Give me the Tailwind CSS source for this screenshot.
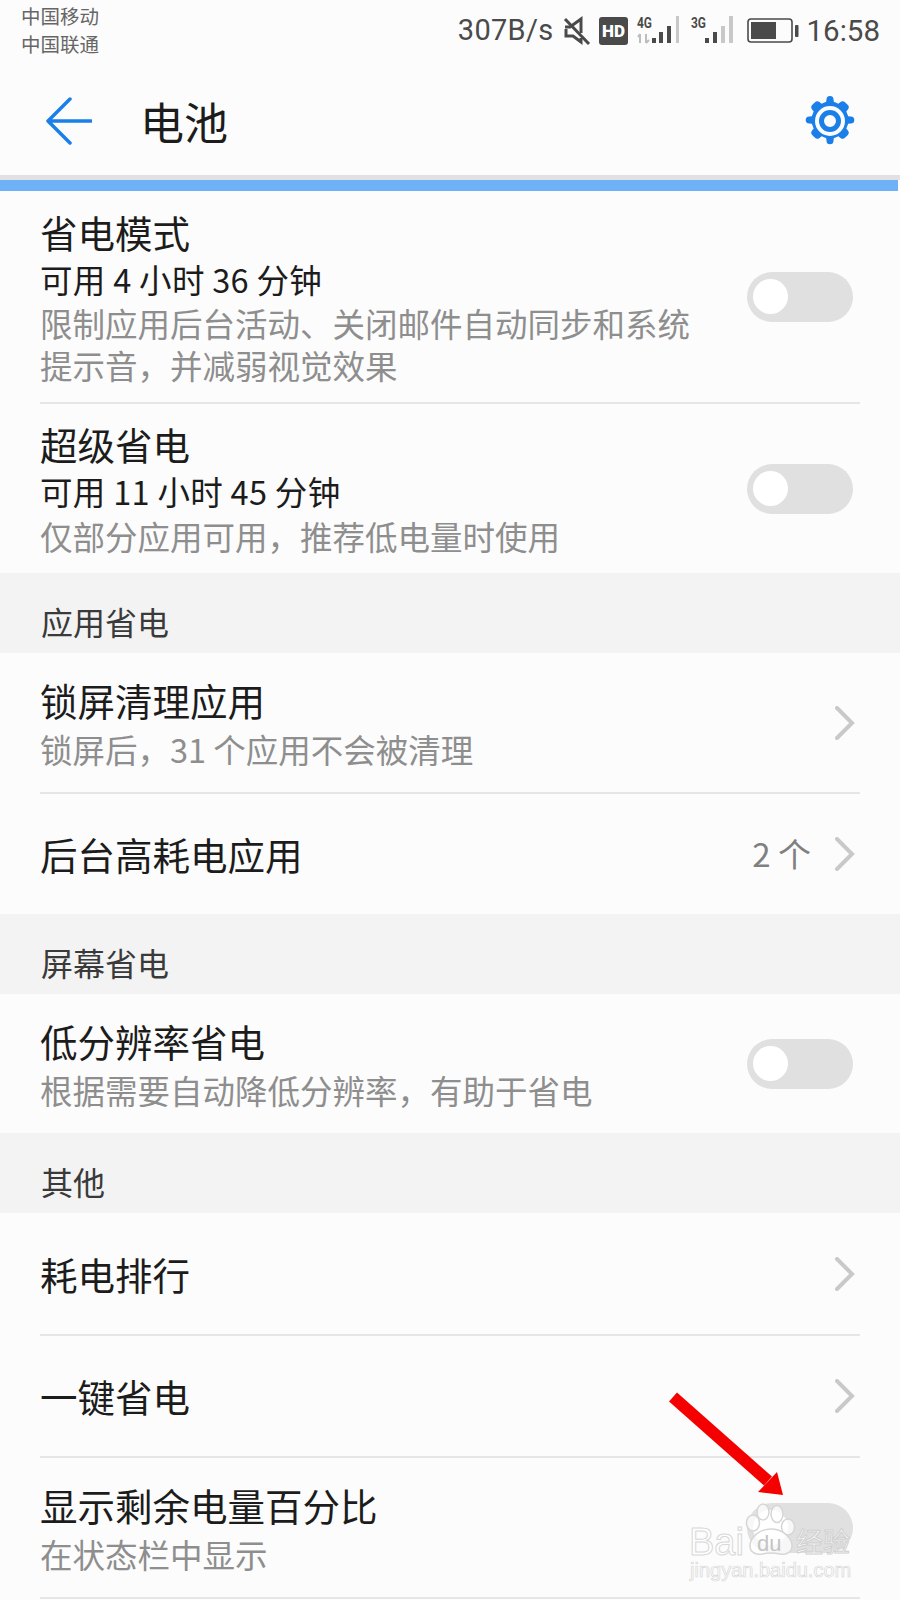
<!DOCTYPE html>
<html lang="zh-CN">

<head>
  <meta charset="UTF-8">
  <meta name="viewport" content="width=device-width, initial-scale=1.0">
  <title>电池</title>
  <script src="https://cdn.jsdelivr.net/npm/@tailwindcss/browser@4"></script>
</head>

<body class="bg-[#fcfcfc]">
  <div class="relative w-[900px] h-[1600px] overflow-hidden bg-[#fcfcfc] font-['Noto_Sans_CJK_SC','Noto_Sans',sans-serif] text-[#1c1c1c]">

    <!-- status bar -->
    <div class="flex justify-between h-[70px] pl-[21px] pr-[20px]">
      <div class="pt-[2px] text-[19.5px] leading-[28px] text-[#666]">
        <div>中国移动</div>
        <div>中国联通</div>
      </div>
      <div class="flex items-center h-[62px] text-[#4a4a4a]">
        <span class="font-['Roboto',sans-serif] text-[29px] tracking-[0.3px]">307B/s</span>
        <svg class="ml-[9px]" width="28" height="30" viewBox="0 0 28 30" fill="none" stroke="#4a4a4a" stroke-width="3">
          <path d="M2 11h5l11-8v14M18 22v4l-8-6H3v-7" />
          <path d="M2 3l24 25" />
        </svg>
        <svg class="ml-[8px]" width="29" height="28" viewBox="0 0 29 28">
          <rect width="29" height="28" rx="3" fill="#4a4a4a" />
          <text x="14.5" y="20" text-anchor="middle" font-family="Roboto" font-weight="900" font-size="17" fill="#fff">HD</text>
        </svg>
        <svg class="ml-[8px] mt-[-2px] overflow-visible" width="46" height="28" viewBox="0 0 46 28">
          <text x="1" y="12" font-family="Roboto" font-weight="700" font-size="15" fill="#4a4a4a" textLength="15" lengthAdjust="spacingAndGlyphs">4G</text>
          <path d="M4 18v9M4 18l-2 3M10 27v-9M10 27l3-3" stroke="#bdbdbd" stroke-width="2" fill="none" />
          <rect x="16" y="22" width="4" height="5" fill="#4a4a4a" />
          <rect x="23" y="16" width="4" height="11" fill="#4a4a4a" />
          <rect x="31" y="10" width="4" height="17" fill="#4a4a4a" />
          <rect x="40" y="0" width="3" height="27" fill="#c8c8c8" />
        </svg>
        <svg class="ml-[8px] mt-[-2px] overflow-visible" width="46" height="28" viewBox="0 0 46 28">
          <text x="1" y="12" font-family="Roboto" font-weight="700" font-size="15" fill="#4a4a4a" textLength="15" lengthAdjust="spacingAndGlyphs">3G</text>
          <rect x="15" y="22" width="4" height="5" fill="#4a4a4a" />
          <rect x="23" y="16" width="4" height="11" fill="#4a4a4a" />
          <rect x="31" y="10" width="4" height="17" fill="#c8c8c8" />
          <rect x="39" y="0" width="4" height="27" fill="#c8c8c8" />
        </svg>
        <svg class="ml-[11px]" width="52" height="26" viewBox="0 0 52 26">
          <rect x="1" y="1" width="44" height="23" rx="3" fill="none" stroke="#4a4a4a" stroke-width="1.6" />
          <rect x="4" y="4" width="25" height="17" fill="#4a4a4a" />
          <rect x="48" y="7" width="3.5" height="12" rx="1" fill="#4a4a4a" />
        </svg>
        <span class="ml-[8px] font-['Roboto',sans-serif] text-[29.5px]">16:58</span>
      </div>
    </div>

    <!-- header -->
    <div class="flex items-center justify-between h-[105px] pl-[46px] pr-[44px] pb-[4px]">
      <div class="flex items-center">
        <svg width="46" height="48" viewBox="0 0 46 48" fill="none" stroke="#1a7fe8" stroke-width="3.5" stroke-linecap="round" stroke-linejoin="round">
          <path d="M24 2L2 24l22 22M2 24h43" />
        </svg>
        <span class="ml-[48px] text-[44px] leading-none">电池</span>
      </div>
      <svg width="52" height="52" viewBox="0 0 52 52">
        <path d="M26 1a3.5 3.5 0 0 1 3.5 3.2l.3 2.6 4.6 1.9 2.1-1.6a3.5 3.5 0 0 1 4.7 .3l2.4 2.4a3.5 3.5 0 0 1 .3 4.7l-1.6 2.1 1.9 4.6 2.6.3a3.5 3.5 0 0 1 0 7l-2.6.3-1.9 4.6 1.6 2.1a3.5 3.5 0 0 1-.3 4.7l-2.4 2.4a3.5 3.5 0 0 1-4.7.3l-2.1-1.6-4.6 1.9-.3 2.6a3.5 3.5 0 0 1-7 0l-.3-2.6-4.6-1.9-2.1 1.6a3.5 3.5 0 0 1-4.7-.3l-2.4-2.4a3.5 3.5 0 0 1-.3-4.7l1.6-2.1-1.9-4.6-2.6-.3a3.5 3.5 0 0 1 0-7l2.6-.3 1.9-4.6-1.6-2.1a3.5 3.5 0 0 1 .3-4.7l2.4-2.4a3.5 3.5 0 0 1 4.7-.3l2.1 1.6 4.6-1.9.3-2.6A3.5 3.5 0 0 1 26 1z" fill="#1a7fe8" />
        <circle cx="26" cy="26" r="15" fill="#fcfcfc" />
        <circle cx="26" cy="26" r="8.5" fill="none" stroke="#1a7fe8" stroke-width="5" />
      </svg>
    </div>
    <div class="h-[5px] bg-[#e1e1e1]"></div>
    <div class="h-[11px] w-[898px] bg-[#6fb1f6]"></div>

    <!-- 省电模式 -->
    <div class="mx-[40px] h-[213px] flex items-center justify-between border-b-2 border-[#e6e6e6]">
      <div>
        <div class="text-[37.5px] leading-[48px]">省电模式</div>
        <div class="text-[32.5px] leading-[46px] tracking-[0.3px]">可用 4 小时 36 分钟</div>
        <div class="text-[32.5px] leading-[42px] text-[#8e8e8e]">限制应用后台活动、关闭邮件自动同步和系统<br>提示音，并减弱视觉效果</div>
      </div>
      <div class="w-[106px] h-[50px] mr-[7px] shrink-0 rounded-full bg-[#e0e0e0] flex items-center pl-[6px]">
        <div class="w-[35px] h-[35px] rounded-full bg-white"></div>
      </div>
    </div>

    <!-- 超级省电 -->
    <div class="mx-[40px] h-[169px] flex items-center justify-between">
      <div>
        <div class="text-[37.5px] leading-[48px]">超级省电</div>
        <div class="text-[32.5px] leading-[46px] tracking-[0.3px]">可用 11 小时 45 分钟</div>
        <div class="text-[32.5px] leading-[44px] text-[#8e8e8e]">仅部分应用可用，推荐低电量时使用</div>
      </div>
      <div class="w-[106px] h-[50px] mr-[7px] shrink-0 rounded-full bg-[#e0e0e0] flex items-center pl-[6px]">
        <div class="w-[35px] h-[35px] rounded-full bg-white"></div>
      </div>
    </div>

    <div class="h-[80px] bg-[#f3f3f3] pl-[41px] pt-[26px] text-[32px] leading-[44px] text-[#3a3a3a]">应用省电</div>

    <!-- 锁屏清理应用 -->
    <div class="mx-[40px] h-[141px] flex items-center justify-between border-b-2 border-[#e6e6e6]">
      <div class="pt-[2px]">
        <div class="text-[37.5px] leading-[50px]">锁屏清理应用</div>
        <div class="text-[32.5px] leading-[48px] text-[#8e8e8e]">锁屏后，31 个应用不会被清理</div>
      </div>
      <svg class="mr-[5px]" width="20" height="34" viewBox="0 0 20 34" fill="none" stroke="#c9c9c9" stroke-width="4" stroke-linecap="round">
        <path d="M2 2l15 15L2 32" />
      </svg>
    </div>

    <!-- 后台高耗电应用 -->
    <div class="mx-[40px] h-[120px] flex items-center justify-between">
      <div class="text-[37.5px] leading-[50px]">后台高耗电应用</div>
      <div class="flex items-center mr-[5px]">
        <span class="text-[33px] text-[#808080]">2 个</span>
        <svg class="ml-[24px]" width="20" height="34" viewBox="0 0 20 34" fill="none" stroke="#c9c9c9" stroke-width="4" stroke-linecap="round">
          <path d="M2 2l15 15L2 32" />
        </svg>
      </div>
    </div>

    <div class="h-[80px] bg-[#f3f3f3] pl-[41px] pt-[26px] text-[32px] leading-[44px] text-[#3a3a3a]">屏幕省电</div>

    <!-- 低分辨率省电 -->
    <div class="mx-[40px] h-[139px] flex items-center justify-between">
      <div class="pt-[1px]">
        <div class="text-[37.5px] leading-[50px]">低分辨率省电</div>
        <div class="text-[32.5px] leading-[47px] text-[#8e8e8e]">根据需要自动降低分辨率，有助于省电</div>
      </div>
      <div class="w-[106px] h-[50px] mr-[7px] shrink-0 rounded-full bg-[#e0e0e0] flex items-center pl-[6px]">
        <div class="w-[35px] h-[35px] rounded-full bg-white"></div>
      </div>
    </div>

    <div class="h-[80px] bg-[#f3f3f3] pl-[41px] pt-[26px] text-[32px] leading-[44px] text-[#3a3a3a]">其他</div>

    <!-- 耗电排行 -->
    <div class="mx-[40px] h-[123px] flex items-center justify-between border-b-2 border-[#e6e6e6]">
      <div class="text-[37.5px] leading-[50px]">耗电排行</div>
      <svg class="mr-[5px]" width="20" height="34" viewBox="0 0 20 34" fill="none" stroke="#c9c9c9" stroke-width="4" stroke-linecap="round">
        <path d="M2 2l15 15L2 32" />
      </svg>
    </div>

    <!-- 一键省电 -->
    <div class="mx-[40px] h-[122px] flex items-center justify-between border-b-2 border-[#e6e6e6]">
      <div class="text-[37.5px] leading-[50px]">一键省电</div>
      <svg class="mr-[5px]" width="20" height="34" viewBox="0 0 20 34" fill="none" stroke="#c9c9c9" stroke-width="4" stroke-linecap="round">
        <path d="M2 2l15 15L2 32" />
      </svg>
    </div>

    <!-- 显示剩余电量百分比 -->
    <div class="mx-[40px] h-[141px] flex items-center justify-between border-b-2 border-[#e6e6e6]">
      <div class="pt-[1px]">
        <div class="text-[37.5px] leading-[50px]">显示剩余电量百分比</div>
        <div class="text-[32.5px] leading-[47px] text-[#8e8e8e]">在状态栏中显示</div>
      </div>
      <div class="w-[106px] h-[50px] mr-[7px] shrink-0 rounded-full bg-[#e0e0e0] flex items-center pl-[6px]">
        <div class="w-[35px] h-[35px] rounded-full bg-white"></div>
      </div>
    </div>

    <!-- red arrow drawn over the screenshot -->
    <svg class="absolute left-[660px] top-[1385px]" width="135" height="120" viewBox="0 0 135 120">
      <path d="M13 12L108 96" stroke="#f40000" stroke-width="12" fill="none" />
      <path d="M117 87L123 110L98 107z" fill="#f40000" />
    </svg>

    <!-- baidu watermark -->
    <svg class="absolute left-[745px] top-[1503px]" width="52" height="54" viewBox="0 0 52 54" fill="#ffffff" fill-opacity="0.75" stroke="#d6d6d6" stroke-width="1.5">
      <ellipse cx="8" cy="20" rx="6.5" ry="8" />
      <ellipse cx="18" cy="9" rx="6" ry="8" />
      <ellipse cx="32" cy="11" rx="6" ry="8.5" />
      <ellipse cx="43" cy="24" rx="6.5" ry="8" />
      <path d="M5 43c0-9 10-17 21-17s21 8 21 17c0 7-7 9-12 8-5-1-13-1-18 0-5 1-12-1-12-8z" />
    </svg>
    <div class="absolute left-[689px] top-[1520px] text-[38px] leading-[44px] font-['Liberation_Sans',sans-serif] text-white/80 [-webkit-text-stroke:1px_#d8d8d8]">Bai</div>
    <div class="absolute left-[757px] top-[1531px] text-[22px] leading-[26px] font-['Liberation_Sans',sans-serif] text-[#c4c4c4]">du</div>
    <div class="absolute left-[796px] top-[1521px] text-[27px] leading-[40px] text-white/80 [-webkit-text-stroke:1px_#d0d0d0]">经验</div>
    <div class="absolute left-[690px] top-[1557px] text-[20px] leading-[26px] font-['Liberation_Sans',sans-serif] text-white/80 [-webkit-text-stroke:0.7px_#d8d8d8]">jingyan.baidu.com</div>
  </div>
</body>

</html>
